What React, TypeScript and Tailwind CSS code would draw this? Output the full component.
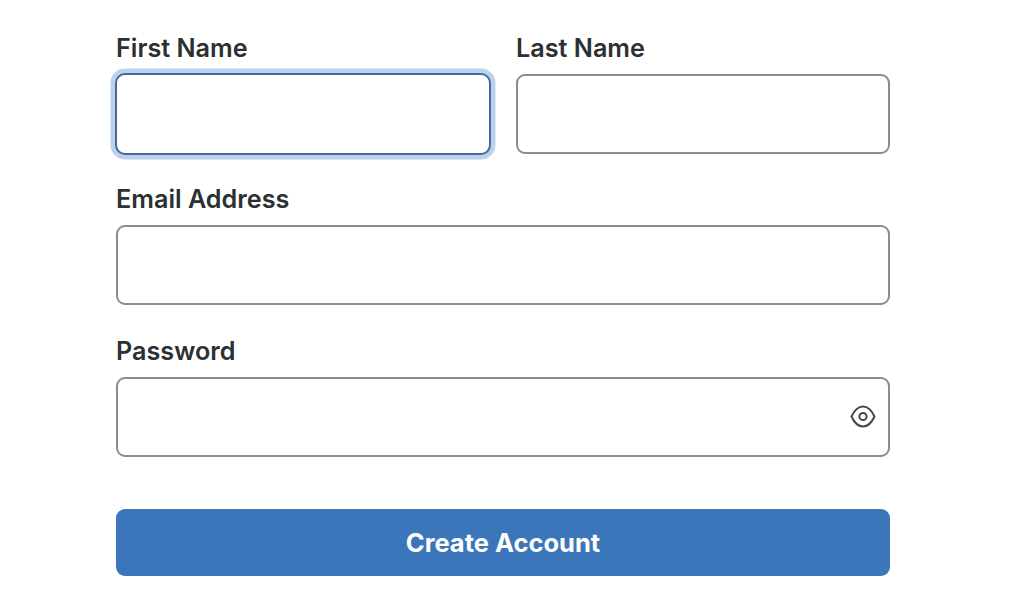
import React from "react";

function Field({ label, focused, children, className = "" }: { label: string; focused?: boolean; children?: React.ReactNode; className?: string }) {
  return (
    <div className={`flex flex-col ${className}`}>
      <label className="h-[30px] mb-[10px] text-[25.2px] leading-[30px] font-semibold text-[#2c3032]">{label}</label>
      <div
        className={
          focused
            ? "relative h-[82px] -mx-px -mb-px rounded-[10px] bg-white border-[2.5px] border-[#44699f] shadow-[0_0_0_4.5px_#bcd2ec]"
            : "relative h-[80px] mt-px rounded-[9px] bg-white border-2 border-[#8a8c8e]"
        }
      >
        {children}
      </div>
    </div>
  );
}

export default function App() {
  return (
    <div className="w-[1024px] h-[591px] overflow-hidden bg-white font-['Inter',sans-serif]">
      <div className="ml-[116px] w-[774px] pt-[33px] flex flex-col gap-[30px]">
        <div className="flex gap-[26px]">
          <Field label="First Name" focused className="w-[374px]" />
          <Field label="Last Name" className="w-[374px]" />
        </div>
        <Field label="Email Address" />
        <Field label="Password" className="mt-px">
          <svg
            className="absolute right-[12px] top-[26px]"
            width="26"
            height="23"
            viewBox="0 0 26 23"
            fill="none"
            stroke="#44484b"
            strokeWidth="2"
          >
            <path d="M1.5 11.5C4.5 5 8.5 1.5 13 1.5S21.5 5 24.5 11.5C21.5 18 17.5 21.5 13 21.5S4.5 18 1.5 11.5Z" strokeLinejoin="round" />
            <circle cx="13" cy="11.5" r="3.6" />
          </svg>
        </Field>
        <button className="mt-[22px] h-[67px] pt-[2px] rounded-[9px] bg-[#3b76bb] text-white text-[25.5px] font-bold">
          Create Account
        </button>
      </div>
    </div>
  );
}
